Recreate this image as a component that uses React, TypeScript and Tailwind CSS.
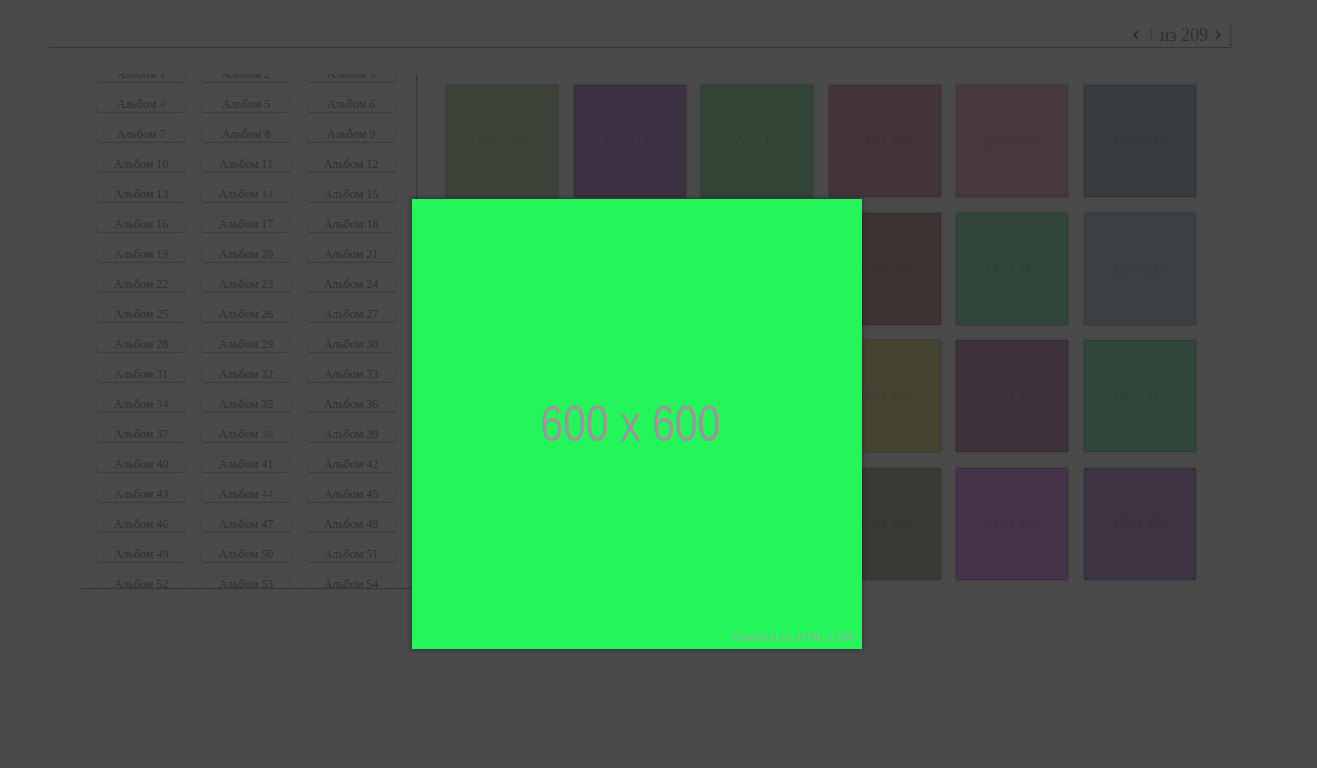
const tiles = [
  ["#3e4339", "#3c3243", "#334536", "#43333b", "#47383e", "#363c3f"],
  ["#3a3e3a", "#3d3540", "#363f3a", "#3e3333", "#314539", "#3a4044"],
  ["#3b3b36", "#3a3a40", "#3a3c38", "#454433", "#3e323b", "#30463a"],
  ["#3a3a3a", "#3b3a40", "#3a3c3a", "#383a33", "#45334a", "#3e3343"],
];

const tinted: Record<number, string> = {
  4: "text-[#44372a]",
  14: "text-[#44372a]",
  34: "text-[#2b3744]",
  38: "text-[#44372a]",
  44: "text-[#44372a]",
};

const Chevron = ({ dir }: { dir: "left" | "right" }) => (
  <svg width="8" height="12" viewBox="0 0 8 12" className="text-[#2e2e2e]">
    <polyline
      points={dir === "left" ? "6,2 2.2,6 6,10" : "2,2 5.8,6 2,10"}
      fill="none"
      stroke="currentColor"
      strokeWidth="2"
    />
  </svg>
);

const AlbumButton = ({ n }: { n: number }) => (
  <div className="h-[16px] rounded-[4px] border border-[#464646] shadow-[0_1px_1px_rgba(0,0,0,0.18)] flex items-center justify-center text-[12px] leading-none text-[#2e2e2e]">
    Альбом <span className={"ml-[3px] " + (tinted[n] ?? "")}>{n}</span>
  </div>
);

export default function App() {
  const albums = Array.from({ length: 54 }, (_, i) => i + 1);

  return (
    <div className="relative w-full h-[768px] overflow-hidden bg-[#4a4a4a] font-['Liberation_Serif',serif]">
      {/* header with pager */}
      <div className="ml-[48px] mt-[22px] w-[1182px] h-[25px] shadow-[1px_1px_1px_rgba(0,0,0,0.26)] flex items-center justify-end pr-[8px]">
        <div className="flex items-center gap-[6px] text-[18px] leading-none text-[#323232]">
          <Chevron dir="left" />
          <span>
            <span className="text-[#2b4553]">1</span> из 209
          </span>
          <Chevron dir="right" />
        </div>
      </div>

      <div className="flex mt-[27px]">
        {/* albums list */}
        <div className="ml-[80px] w-[336px] h-[514px] overflow-hidden shadow-[1px_1px_1px_rgba(0,0,0,0.26)] pl-[16px]">
          <div className="-mt-[8px] grid grid-cols-[repeat(3,90px)] gap-x-[15px] gap-y-[14px]">
            {albums.map((n) => (
              <AlbumButton key={n} n={n} />
            ))}
          </div>
        </div>

        {/* thumbnails */}
        <div className="ml-[30px] mt-[11px] w-[750px] h-fit flex flex-col gap-[15.5px] font-['Liberation_Sans',sans-serif]">
          {tiles.map((row, r) => (
            <div key={r} className="flex justify-between">
              {row.map((c, i) => (
                <div
                  key={i}
                  className="w-[112px] h-[112px] border border-black/10 shadow-[0_0_3px_rgba(0,0,0,0.2)] flex items-center justify-center text-[12px] leading-none text-black/10"
                  style={{ backgroundColor: c }}
                >
                  150 x 150
                </div>
              ))}
            </div>
          ))}
        </div>
      </div>

      {/* lightbox image */}
      <div className="absolute left-[412px] top-[199px] w-[450px] h-[450px] bg-[#23f55a] shadow-[0_0_6px_rgba(0,0,0,0.45)] flex items-center justify-center">
        <span className="mr-[13px] scale-x-[0.82] text-[50px] leading-none text-[#999] font-['Liberation_Sans',sans-serif]">
          600 x 600
        </span>
        <span className="absolute right-[8px] bottom-[6px] text-[10px] leading-none tracking-[0.3px] text-[#8fb898] font-['DejaVu_Sans',sans-serif]">
          Powered by HTML.COM
        </span>
      </div>
    </div>
  );
}
